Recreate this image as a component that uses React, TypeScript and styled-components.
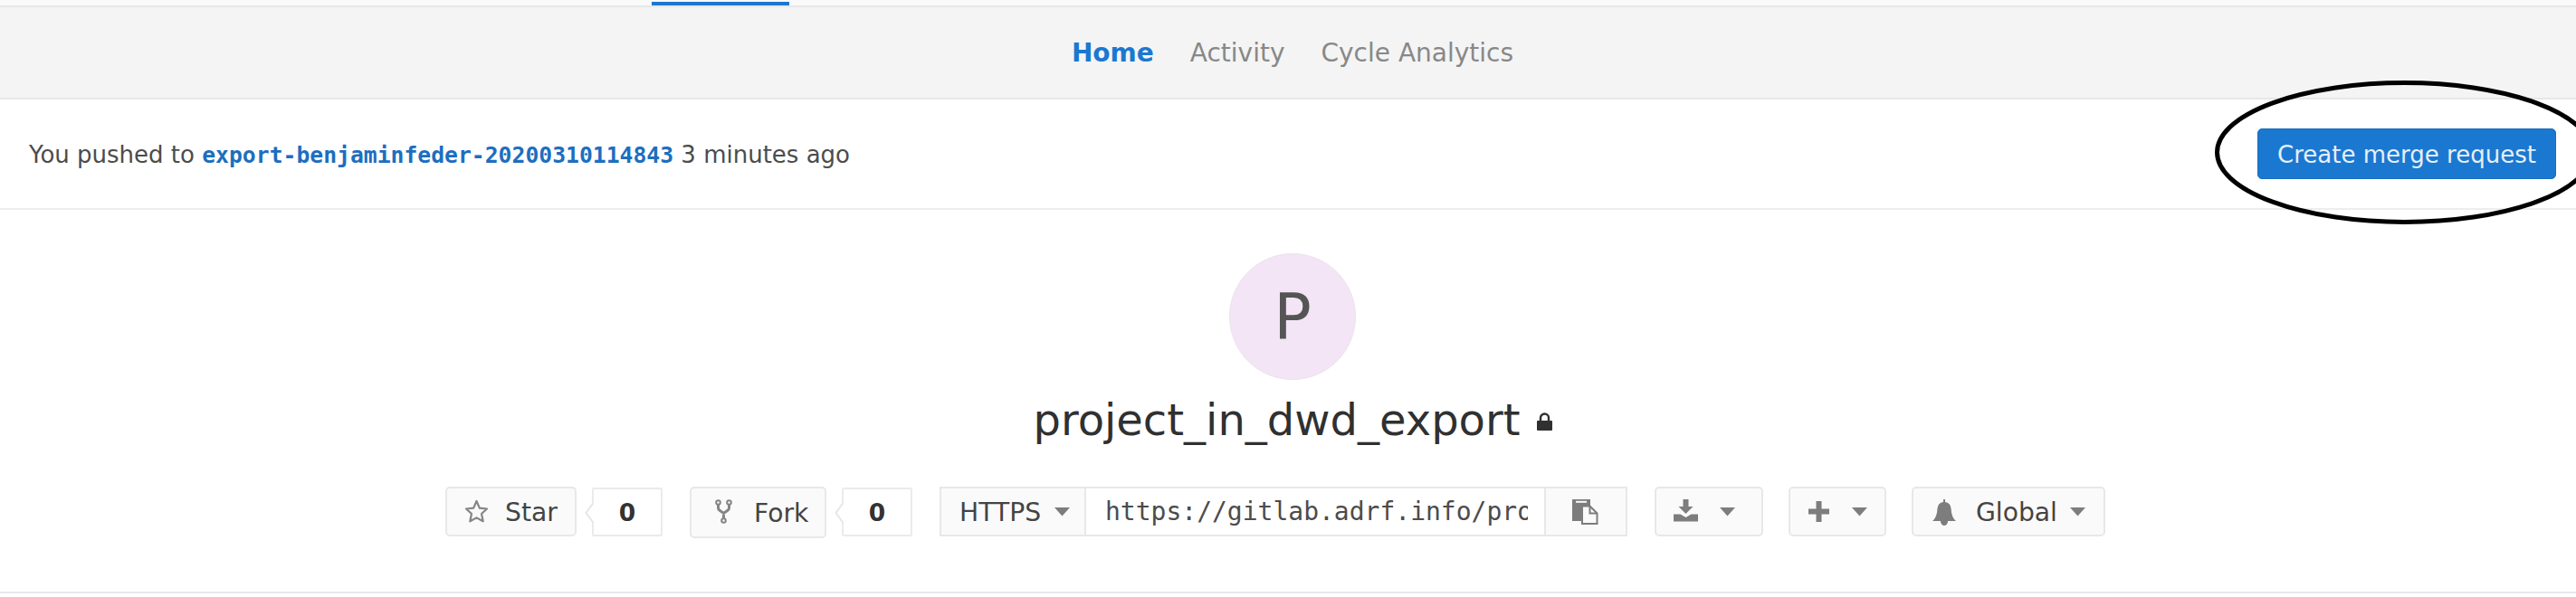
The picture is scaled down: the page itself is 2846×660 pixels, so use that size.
import React from "react";
import styled, { createGlobalStyle } from "styled-components";

const Global = createGlobalStyle`
  *, *::before, *::after { box-sizing: border-box; }
  body { margin: 0; background: #fff; overflow: hidden; }
`;

const Page = styled.div`
  position: relative;
  width: 2846px;
  height: 660px;
  overflow: hidden;
  background: #fff;
  color: #3d3d3d;
  font-family: "DejaVu Sans", Verdana, sans-serif;
  font-size: 28px;
  white-space: nowrap;
`;

const TopNav = styled.div`
  height: 8px;
  padding: 2px 0 0 720px;
  background: #fafafa;
  border-bottom: 2px solid #e7e7e7;
`;

const ActiveTab = styled.div`
  width: 152px;
  height: 4px;
  background: #1b78d0;
`;

const SubNav = styled.nav`
  display: flex;
  justify-content: center;
  align-items: center;
  gap: 40px;
  height: 102px;
  padding: 1px 0 0 10px;
  background: #f4f4f4;
  border-bottom: 2px solid #e7e7e7;
`;

const SubNavLink = styled.a<{ $active?: boolean }>`
  color: ${(p) => (p.$active ? "#1b78d0" : "#888")};
  font-weight: ${(p) => (p.$active ? 700 : 400)};
`;

const PushBar = styled.section`
  display: flex;
  justify-content: space-between;
  align-items: center;
  height: 122px;
  padding: 0 22px 0 32px;
  border-bottom: 2px solid #ededed;
  font-size: 26px;
  color: #4c4c4c;
`;

const PushMessage = styled.div`
  padding-top: 2px;
`;

const BranchLink = styled.a`
  color: #1d6ebf;
  font: 700 24.72px "DejaVu Sans Mono", monospace;
`;

const MergeButton = styled.button`
  width: 330px;
  height: 56px;
  padding: 2px 0 0;
  border: 1px solid #196cbc;
  border-radius: 5px;
  background: #1b78d0;
  color: #e6eff8;
  font: 400 26px "DejaVu Sans", sans-serif;
`;

const Highlight = styled.svg`
  position: absolute;
  left: 2440px;
  top: 80px;
`;

const Project = styled.main`
  display: flex;
  flex-direction: column;
  align-items: center;
  height: 424px;
  padding: 48px 0 0 10px;
  border-bottom: 2px solid #e9e9e9;
`;

const Avatar = styled.div`
  display: grid;
  place-items: center;
  width: 140px;
  height: 140px;
  border: 1px solid #ebe3ec;
  border-radius: 50%;
  background: #f3e5f5;
  color: #555;
  font-size: 69px;
  line-height: 1;
`;

const Title = styled.h1`
  display: flex;
  align-items: center;
  gap: 18px;
  height: 58px;
  margin: 15px 0 0;
  font-size: 48px;
  font-weight: 400;
  color: #303030;

  svg { margin-top: 3px; }
`;

const Controls = styled.div`
  display: flex;
  align-items: flex-start;
  align-self: flex-start;
  margin: 45px 0 0 482px;
`;

const Button = styled.button<{ $w: number; $h?: number; $left?: number; $joined?: boolean }>`
  display: flex;
  align-items: center;
  flex: none;
  width: ${(p) => p.$w}px;
  height: ${(p) => p.$h ?? 55}px;
  padding: 1px 0 0 ${(p) => p.$left ?? 20}px;
  border: 2px solid #e8e8e8;
  border-radius: ${(p) => (p.$joined ? 0 : 5)}px;
  background: #fafafa;
  color: #444;
  font: 400 28.2px "DejaVu Sans", sans-serif;
`;

const Icon = styled.svg<{ $raise?: number }>`
  flex: none;
  margin-bottom: ${(p) => (p.$raise ?? 0) * 2}px;
`;

const Space = styled.span<{ $w: number }>`
  flex: none;
  width: ${(p) => p.$w}px;
`;

const Count = styled.div`
  position: relative;
  display: grid;
  place-items: center;
  width: 78px;
  height: 54px;
  margin: 1px 0 0 17px;
  border: 2px solid #ebebeb;
  border-radius: 2px;
  color: #333;
  font-size: 26.5px;
  font-weight: 700;
`;

const Pointer = styled.svg`
  position: absolute;
  left: -10px;
  top: 15px;
`;

const CloneBox = styled.div`
  display: flex;
  margin-left: 30px;
`;

const CloneUrl = styled.div`
  width: 506px;
  height: 55px;
  padding: 1px 18px 0 21px;
  border: solid #e8e8e8;
  border-width: 2px 0;
  line-height: 50px;
  font-family: "DejaVu Sans Mono", monospace;
  color: #4c4c4c;

  span { display: block; overflow: hidden; }
`;

const Caret = () => (
  <Icon width="17" height="10" viewBox="0 0 17 10"><path d="M0 0H17L8.5 9.5Z" fill="#7d7d7d" /></Icon>
);

const Counter = () => (
  <Count>
    <Pointer width="11" height="22" viewBox="0 0 11 22">
      <path d="M10 0V22L1.5 11Z" fill="#fff" />
      <path d="M9.5 0L1.5 11L9.5 22" fill="none" stroke="#e6e6e6" strokeWidth="2" />
    </Pointer>
    0
  </Count>
);

export default function App() {
  return (
    <Page>
      <Global />
      <TopNav><ActiveTab /></TopNav>
      <SubNav>
        <SubNavLink $active>Home</SubNavLink>
        <SubNavLink>Activity</SubNavLink>
        <SubNavLink>Cycle Analytics</SubNavLink>
      </SubNav>
      <PushBar>
        <PushMessage>You pushed to <BranchLink>export-benjaminfeder-20200310114843</BranchLink> 3 minutes ago</PushMessage>
        <MergeButton>Create merge request</MergeButton>
      </PushBar>
      <Project>
        <Avatar>P</Avatar>
        <Title>
          project_in_dwd_export
          <svg width="17" height="20" viewBox="0 0 17 20">
            <path d="M4 10V6a4.5 4.5 0 0 1 9 0v4" fill="none" stroke="#303030" strokeWidth="2.4" />
            <rect y="9" width="17" height="11" rx="1" fill="#303030" />
          </svg>
        </Title>
        <Controls>
          <Button $w={145} $left={19}>
            <Icon $raise={1} width="27" height="26" viewBox="0 0 27 26">
              <path d="M13.5 2L16.8 9.6L25 10.5L19 16L20.7 24.3L13.5 20.4L6.3 24.3L8 16L2 10.5L10.2 9.6Z" fill="none" stroke="#858585" strokeWidth="2.2" strokeLinejoin="round" />
            </Icon>
            <Space $w={18} />Star
          </Button>
          <Counter />
          <Space $w={30} />
          <Button $w={151} $h={57} $left={26}>
            <Icon $raise={2} width="19" height="27" viewBox="0 0 19 27">
              <g fill="none" stroke="#858585" strokeWidth="2">
                <circle cx="3.5" cy="3.5" r="2.3" /><circle cx="15.5" cy="3.5" r="2.3" /><circle cx="9.5" cy="23.5" r="2.3" />
                <path d="M3.5 6v3.5q0 1.7 1.6 2.8L9.5 15.5l4.4-3.2q1.6-1.1 1.6-2.8V6M9.5 15v6" strokeWidth="3" />
              </g>
            </Icon>
            <Space $w={24} />Fork
          </Button>
          <Counter />
          <CloneBox>
            <Button $w={162} $left={20} $joined>HTTPS<Space $w={15} /><Caret /></Button>
            <CloneUrl><span>https://gitlab.adrf.info/pro</span></CloneUrl>
            <Button $w={92} $left={29} $joined>
              <Icon width="29" height="28" viewBox="0 0 29 28">
                <path d="M0 0H20V7H10V24H0Z" fill="#7d7d7d" /><path d="M4 2.8H16" stroke="#fafafa" strokeWidth="2" />
                <path d="M11 7.5H19.5L27.5 15.5V27H11Z" fill="#fafafa" stroke="#7d7d7d" strokeWidth="2" />
                <path d="M19.5 7.5V15.5H27.5" fill="none" stroke="#7d7d7d" strokeWidth="2" />
              </Icon>
            </Button>
          </CloneBox>
          <Space $w={30} />
          <Button $w={120} $left={19}>
            <Icon $raise={2} width="27" height="25" viewBox="0 0 27 25" fill="#7d7d7d">
              <path d="M10.5 0h6v8h5L13.5 16L5.5 8h5Z" /><path d="M0 16.500h7.500l6 3.500 6-3.500H27V24.500H0Z" />
            </Icon>
            <Space $w={24} /><Caret />
          </Button>
          <Space $w={28} />
          <Button $w={108} $left={20}>
            <Icon $raise={1} width="23" height="23" viewBox="0 0 23 23"><path d="M8.500 0h6v8.500H23v6H14.500V23h-6V14.500H0v-6H8.500Z" fill="#7d7d7d" /></Icon>
            <Space $w={25} /><Caret />
          </Button>
          <Space $w={28} />
          <Button $w={214} $left={21}>
            <Icon width="26" height="29" viewBox="0 0 26 29" fill="#7d7d7d">
              <path d="M12 0h2v3q6 1 6.500 7 .5 10 5.500 14H0Q5 20 5.500 10 6 4 12 3Z" /><path d="M9 23h8v2q-1 4-4 4t-4-4Z" />
            </Icon>
            <Space $w={22} />Global<Space $w={14} /><Caret />
          </Button>
        </Controls>
      </Project>
      <Highlight width="440" height="180" viewBox="0 0 440 180">
        <ellipse cx="216.5" cy="88.5" rx="207" ry="77" fill="none" stroke="#000" strokeWidth="5" />
      </Highlight>
    </Page>
  );
}
